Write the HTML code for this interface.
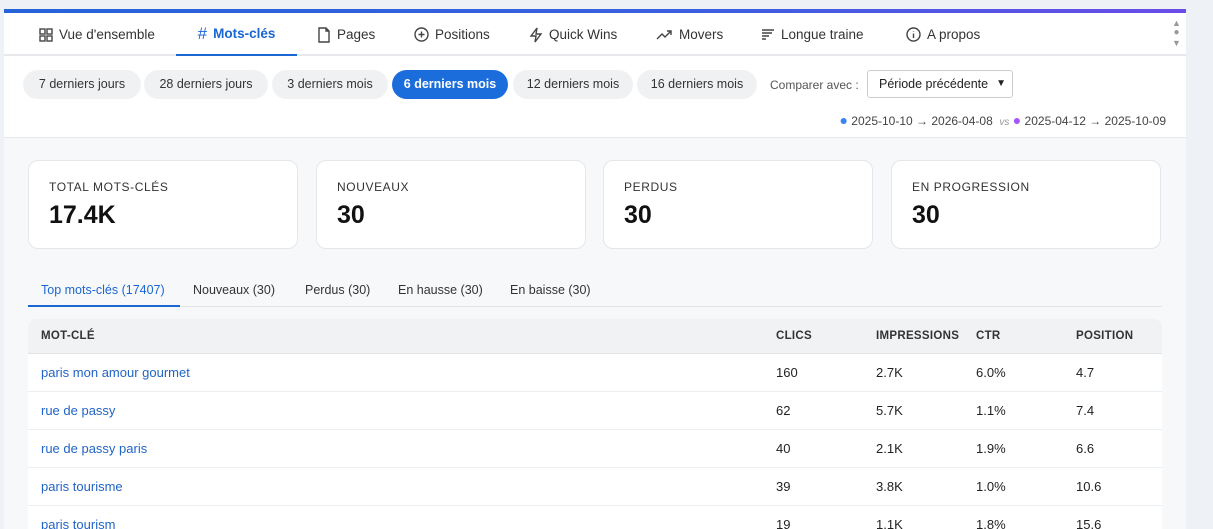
<!DOCTYPE html>
<html><head><meta charset="utf-8"><style>
*{box-sizing:border-box;margin:0;padding:0}
html,body{width:1213px;height:529px;overflow:hidden}
body{background:#eef1f5;font-family:"Liberation Sans",sans-serif;color:#222;position:relative}
.main{position:absolute;left:4px;top:9px;width:1182px;height:520px;background:#f7f8fa;overflow:hidden}
.grad{position:absolute;left:0;top:0;width:1182px;height:4px;background:linear-gradient(90deg,#2563d9,#3b5fe0 60%,#6a4ce8)}
.nav{position:absolute;left:0;top:4px;width:1182px;height:43px;background:#fff;border-bottom:2px solid #e6e8eb}
.nav div{position:absolute;top:0;height:43px;line-height:42px;font-size:13.5px;color:#333;display:flex;align-items:center;gap:6px}
.nav div.act{color:#1a66d2;font-weight:bold;border-bottom:2px solid #1a66d2;height:43px}
.nav svg{stroke:#444;fill:none;stroke-width:1.4}
.filt{position:absolute;left:0;top:47px;width:1182px;height:82px;background:#fff;border-bottom:1px solid #e6e8eb}
.pill{position:absolute;top:14px;height:29px;border-radius:15px;background:#f0f1f3;font-size:12.5px;line-height:29px;text-align:center;color:#333}
.pill.on{background:#1a6ddb;color:#fff;font-weight:bold}
.card{position:absolute;top:151px;width:270px;height:89px;background:#fff;border:1px solid #e4e6ea;border-radius:10px}
.card .l{position:absolute;left:20px;top:19px;font-size:12px;letter-spacing:.6px;color:#333}
.card .v{position:absolute;left:20px;top:40px;font-size:25px;font-weight:bold;color:#111}
.tabs{position:absolute;left:24px;top:268px;width:1134px;height:30px;border-bottom:1px solid #e2e4e8;font-size:12.5px}
.tabs span{position:absolute;top:6px;color:#333}
.tbl{position:absolute;left:24px;top:310px;width:1134px;height:230px;background:#fff;border-radius:8px 8px 0 0;overflow:hidden}
.th{height:35px;background:#f1f2f4;border-bottom:1px solid #e2e4e8;font-size:11.5px;font-weight:bold;color:#333;letter-spacing:.3px;position:relative}
.row{height:38px;border-bottom:1px solid #eceef1;position:relative;font-size:13px}
.c{position:absolute;top:0;line-height:37px}
.th .c{line-height:35px}
.row .c0{color:#2164c7}
</style></head><body>
<div class="main">
<div class="grad"></div>
<div class="nav">
<div style="left:35px"><svg width="14" height="14" viewBox="0 0 14 14"><rect x="1" y="1" width="5" height="5"/><rect x="8" y="1" width="5" height="5"/><rect x="1" y="8" width="5" height="5"/><rect x="8" y="8" width="5" height="5"/></svg>Vue d'ensemble</div>
<div class="act" style="left:172px;width:121px;justify-content:center"><span style="font-size:17px;font-weight:normal">#</span>Mots-clés</div>
<div style="left:313px"><svg width="14" height="16" viewBox="0 0 14 16"><path d="M2 1h7l3 3v11H2z M9 1v3h3"/></svg>Pages</div>
<div style="left:410px"><svg width="15" height="15" viewBox="0 0 15 15"><circle cx="7.5" cy="7.5" r="6.5"/><path d="M7.5 4.5v6M4.5 7.5h6"/></svg>Positions</div>
<div style="left:525px"><svg width="14" height="16" viewBox="0 0 14 16"><path d="M8 1L2 9h5l-1 6 6-8H7z"/></svg>Quick Wins</div>
<div style="left:652px"><svg width="17" height="12" viewBox="0 0 17 12"><path d="M1 10l5-5 3 3 6-6M11 2h4v4"/></svg>Movers</div>
<div style="left:757px"><svg width="14" height="14" viewBox="0 0 14 14"><path d="M1 2h12M1 5h10M1 8h7M1 11h4"/></svg>Longue traine</div>
<div style="left:902px"><svg width="15" height="15" viewBox="0 0 15 15"><circle cx="7.5" cy="7.5" r="6.5"/><path d="M7.5 6.5v4.5M7.5 4v.5"/></svg>A propos</div>
<div style="left:1168px;flex-direction:column;gap:2px;line-height:8px;font-size:9px;color:#999;top:6px;height:34px">▲<span style="font-size:10px">●</span>▼</div>
</div>
<div class="filt">
<div class="pill" style="left:19px;width:118px">7 derniers jours</div>
<div class="pill" style="left:140px;width:124px">28 derniers jours</div>
<div class="pill" style="left:268px;width:116px">3 derniers mois</div>
<div class="pill on" style="left:388px;width:116px">6 derniers mois</div>
<div class="pill" style="left:509px;width:120px">12 derniers mois</div>
<div class="pill" style="left:633px;width:120px">16 derniers mois</div>
<div style="position:absolute;left:766px;top:22px;font-size:12px;color:#555">Comparer avec :</div>
<div style="position:absolute;left:863px;top:14px;width:146px;height:28px;border:1px solid #ccc;border-radius:3px;font-size:12.5px;line-height:26px;padding-left:11px;color:#222">Période précédente<span style="position:absolute;right:6px;top:0;font-size:10px">&#9660;</span></div>
<div style="position:absolute;right:20px;top:56px;font-size:12px;color:#444"><span style="color:#3b82f6;font-size:14px">●</span> 2025-10-10 → 2026-04-08 &nbsp;<i style="color:#999;font-size:10px">vs</i> <span style="color:#a855f7;font-size:14px">●</span> 2025-04-12 → 2025-10-09</div>
</div>
<div class="card" style="left:24px"><div class="l">TOTAL MOTS-CLÉS</div><div class="v">17.4K</div></div>
<div class="card" style="left:312px"><div class="l">NOUVEAUX</div><div class="v">30</div></div>
<div class="card" style="left:599px"><div class="l">PERDUS</div><div class="v">30</div></div>
<div class="card" style="left:887px"><div class="l">EN PROGRESSION</div><div class="v">30</div></div>
<div class="tabs">
<span style="left:0;width:152px;height:30px;top:0;padding:6px 0 0 13px;color:#1a66d2;border-bottom:2px solid #1a66d2">Top mots-clés (17407)</span>
<span style="left:165px">Nouveaux (30)</span>
<span style="left:277px">Perdus (30)</span>
<span style="left:370px">En hausse (30)</span>
<span style="left:482px">En baisse (30)</span>
</div>
<div class="tbl">
<div class="th"><span class="c" style="left:13px">MOT-CLÉ</span><span class="c" style="left:748px">CLICS</span><span class="c" style="left:848px">IMPRESSIONS</span><span class="c" style="left:948px">CTR</span><span class="c" style="left:1048px">POSITION</span></div>
<div class="row"><span class="c c0" style="left:13px">paris mon amour gourmet</span><span class="c" style="left:748px">160</span><span class="c" style="left:848px">2.7K</span><span class="c" style="left:948px">6.0%</span><span class="c" style="left:1048px">4.7</span></div>
<div class="row"><span class="c c0" style="left:13px">rue de passy</span><span class="c" style="left:748px">62</span><span class="c" style="left:848px">5.7K</span><span class="c" style="left:948px">1.1%</span><span class="c" style="left:1048px">7.4</span></div>
<div class="row"><span class="c c0" style="left:13px">rue de passy paris</span><span class="c" style="left:748px">40</span><span class="c" style="left:848px">2.1K</span><span class="c" style="left:948px">1.9%</span><span class="c" style="left:1048px">6.6</span></div>
<div class="row"><span class="c c0" style="left:13px">paris tourisme</span><span class="c" style="left:748px">39</span><span class="c" style="left:848px">3.8K</span><span class="c" style="left:948px">1.0%</span><span class="c" style="left:1048px">10.6</span></div>
<div class="row"><span class="c c0" style="left:13px">paris tourism</span><span class="c" style="left:748px">19</span><span class="c" style="left:848px">1.1K</span><span class="c" style="left:948px">1.8%</span><span class="c" style="left:1048px">15.6</span></div>
</div>
</div>
</body></html>
